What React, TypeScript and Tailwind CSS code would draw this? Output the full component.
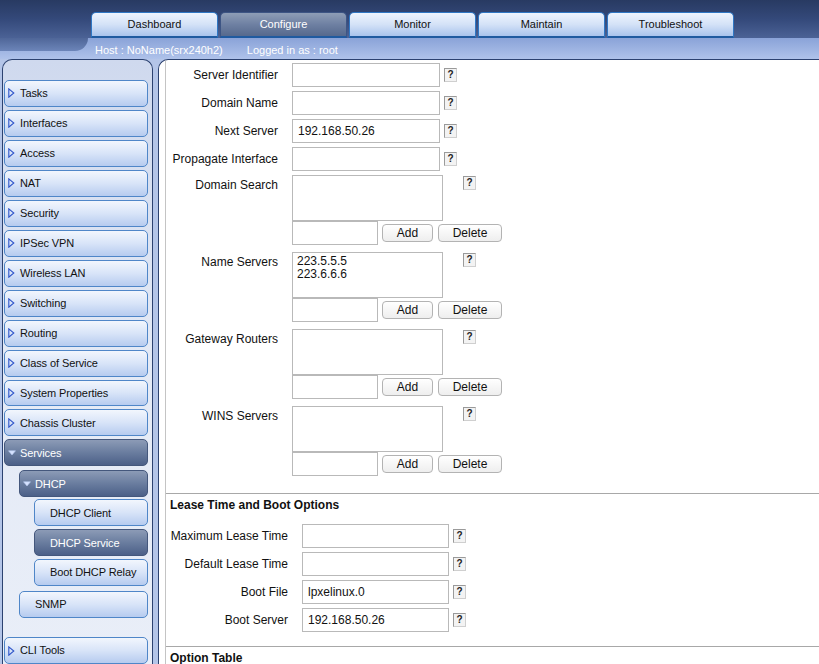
import React from "react";

const font = { fontFamily: '"Liberation Sans", Arial, sans-serif' };

function RightTri({ light }: { light?: boolean }) {
  return (
    <svg width="7" height="10" viewBox="0 0 7 10" className="shrink-0">
      <polygon points="0.8,0.8 5.8,5 0.8,9.2" fill="none" stroke={light ? "#dfe8ff" : "#2f55c9"} strokeWidth="1.1" />
    </svg>
  );
}

function DownTri() {
  return (
    <svg width="8" height="6" viewBox="0 0 8 6" className="shrink-0">
      <polygon points="0.5,0.8 7.5,0.8 4,5" fill="#d7e3ff" stroke="#b7c9f0" strokeWidth="0.6" />
    </svg>
  );
}

type NavProps = {
  label: string;
  indent?: 0 | 15 | 30;
  kind?: "collapsed" | "expanded" | "leaf";
  active?: boolean;
  mt?: string;
};

function NavItem({ label, indent = 0, kind = "collapsed", active = false, mt = "mt-[3px]" }: NavProps) {
  const indentCls = indent === 0 ? "ml-0" : indent === 15 ? "ml-[15px]" : "ml-[30px]";
  const skin = active
    ? "bg-gradient-to-b from-[#8c9bb6] via-[#6a7d9f] to-[#4c6088] border-[#44577c] text-white"
    : "bg-gradient-to-b from-[#f2f6fd] via-[#d8e4f8] to-[#b6cbef] border-[#4f86c8] text-[#111]";
  return (
    <div className={`${mt} ${indentCls} h-[27px] rounded-[5px] border ${skin} flex items-center pl-[3px] text-[11px] tracking-[-0.1px]`}>
      <span className="w-[12px] flex items-center">
        {kind === "collapsed" && <RightTri />}
        {kind === "expanded" && <DownTri />}
      </span>
      <span>{label}</span>
    </div>
  );
}

function Help({ className = "" }: { className?: string }) {
  return (
    <span className={`w-[13px] h-[14px] border border-t-[#9a9a9a] border-l-[#9a9a9a] border-r-[#cfcfcf] border-b-[#cfcfcf] bg-[#f3f3f3] flex items-center justify-center text-[10px] font-bold text-[#222] leading-none shrink-0 ${className}`}>
      ?
    </span>
  );
}

function TextInput({ w, value = "" }: { w: string; value?: string }) {
  return (
    <div className={`${w} h-[24px] border border-[#b9b9b9] bg-white flex items-center pl-[5px] text-[12px] text-[#111] shrink-0`}>
      {value}
    </div>
  );
}

function Btn({ label, w }: { label: string; w: string }) {
  return (
    <div className={`${w} h-[18px] rounded-[4px] border border-[#b3b3b3] bg-gradient-to-b from-white to-[#eeeeee] flex items-center justify-center text-[12px] text-[#111] shrink-0`}>
      {label}
    </div>
  );
}

function SimpleRow({ label, value, mt = "mt-[5px]" }: { label: string; value?: string; mt?: string }) {
  return (
    <div className={`${mt} flex items-center h-[24px]`}>
      <div className="w-[112px] text-right text-[12px] text-[#111] whitespace-nowrap">{label}</div>
      <div className="ml-[14px]">
        <TextInput w="w-[148px]" value={value} />
      </div>
      <Help className="ml-[4px]" />
    </div>
  );
}

function ListRow({ label, lines = [], mt = "mt-[8px]" }: { label: string; lines?: string[]; mt?: string }) {
  return (
    <div className={`${mt} flex items-start`}>
      <div className="w-[112px] text-right text-[12px] text-[#111] pt-[1px] whitespace-nowrap">{label}</div>
      <div className="ml-[14px] flex flex-col">
        <div className="flex items-start">
          <div className="w-[151px] h-[46px] border border-[#b9b9b9] bg-white pl-[4px] pt-[2px] text-[12px] leading-[13px] text-[#111]">
            {lines.map((l) => (
              <div key={l}>{l}</div>
            ))}
          </div>
          <Help className="ml-[20px] mt-[1px]" />
        </div>
        <div className="flex items-center h-[24px]">
          <TextInput w="w-[86px]" />
          <div className="ml-[4px]">
            <Btn label="Add" w="w-[51px]" />
          </div>
          <div className="ml-[5px]">
            <Btn label="Delete" w="w-[64px]" />
          </div>
        </div>
      </div>
    </div>
  );
}

function LeaseRow({ label, value, mt = "mt-[4px]" }: { label: string; value?: string; mt?: string }) {
  return (
    <div className={`${mt} flex items-center h-[24px]`}>
      <div className="w-[122px] text-right text-[12px] text-[#111] whitespace-nowrap">{label}</div>
      <div className="ml-[14px]">
        <TextInput w="w-[147px]" value={value} />
      </div>
      <Help className="ml-[4px]" />
    </div>
  );
}

const tabs = ["Dashboard", "Configure", "Monitor", "Maintain", "Troubleshoot"];

export default function App() {
  return (
    <div style={font} className="w-[819px] h-[664px] overflow-hidden bg-[#b4c5e8] flex flex-col">
      {/* top bar with tabs */}
      <div className="h-[38px] bg-gradient-to-b from-[#283a62] via-[#34497a] to-[#4b6296] flex items-end pl-[91px] gap-[2px] shrink-0">
        {tabs.map((t) => {
          const active = t === "Configure";
          return (
            <div
              key={t}
              className={`w-[127px] h-[26px] rounded-t-[5px] border border-b-2 flex items-center justify-center text-[11px] ${
                active
                  ? "bg-gradient-to-b from-[#8e9db6] via-[#6e80a2] to-[#56698d] border-[#3d5584] border-b-[#1f5aa0] text-white"
                  : "bg-gradient-to-b from-[#eef4fd] via-[#d4e2f7] to-[#a9c3ec] border-[#2f77c4] border-b-[#1f5aa0] text-[#111]"
              }`}
            >
              {t}
            </div>
          );
        })}
      </div>
      {/* host bar */}
      <div className="h-[21px] bg-gradient-to-b from-[#8aa3d8] to-[#afc2ea] flex items-start shrink-0 relative">
        <div className="w-[88px] h-[13px] bg-gradient-to-b from-[#4f6698] to-[#6c85b9] rounded-br-[22px] shrink-0" />
        <div className="ml-[7px] mt-[4px] text-[11px] text-white flex">
          <span>Host : NoName(srx240h2)</span>
          <span className="ml-[24px]">Logged in as : root</span>
        </div>
      </div>
      {/* main */}
      <div className="flex-1 flex min-h-0">
        {/* sidebar */}
        <div className="ml-[2px] w-[151px] rounded-t-[10px] border border-b-0 border-[#2c4270] bg-gradient-to-b from-[#cfd9ee] via-[#e4eaf6] to-[#e9eef8] pl-[1px] pr-[4px] pt-[17px] flex flex-col shrink-0">
          <NavItem label="Tasks" />
          <NavItem label="Interfaces" />
          <NavItem label="Access" />
          <NavItem label="NAT" />
          <NavItem label="Security" />
          <NavItem label="IPSec VPN" />
          <NavItem label="Wireless LAN" />
          <NavItem label="Switching" />
          <NavItem label="Routing" />
          <NavItem label="Class of Service" />
          <NavItem label="System Properties" />
          <NavItem label="Chassis Cluster" />
          <NavItem label="Services" kind="expanded" active />
          <NavItem label="DHCP" indent={15} kind="expanded" active mt="mt-[4px]" />
          <NavItem label="DHCP Client" indent={30} kind="leaf" mt="mt-[2px]" />
          <NavItem label="DHCP Service" indent={30} kind="leaf" active />
          <NavItem label="Boot DHCP Relay" indent={30} kind="leaf" />
          <NavItem label="SNMP" indent={15} kind="leaf" mt="mt-[5px]" />
          <NavItem label="CLI Tools" mt="mt-[19px]" />
        </div>
        {/* content */}
        <div className="ml-[5px] flex-1 rounded-tl-[10px] border-l border-t border-[#2c4270] bg-white overflow-hidden min-w-0">
          <div className="ml-[6px] h-full border-l border-[#c4c4c4] flex flex-col">
            <SimpleRow label="Server Identifier" mt="mt-[3px]" />
            <SimpleRow label="Domain Name" mt="mt-[4px]" />
            <SimpleRow label="Next Server" value="192.168.50.26" mt="mt-[4px]" />
            <SimpleRow label="Propagate Interface" mt="mt-[4px]" />
            <ListRow label="Domain Search" mt="mt-[4px]" />
            <ListRow label="Name Servers" lines={["223.5.5.5", "223.6.6.6"]} mt="mt-[7px]" />
            <ListRow label="Gateway Routers" mt="mt-[7px]" />
            <ListRow label="WINS Servers" mt="mt-[7px]" />
            <div className="mt-[17px] border-t border-[#a8a8a8]" />
            <div className="mt-[4px] pl-[4px] text-[12px] font-bold text-[#111] leading-[14px]">Lease Time and Boot Options</div>
            <LeaseRow label="Maximum Lease Time" mt="mt-[12px]" />
            <LeaseRow label="Default Lease Time" />
            <LeaseRow label="Boot File" value="lpxelinux.0" />
            <LeaseRow label="Boot Server" value="192.168.50.26" />
            <div className="mt-[14px] border-t border-[#a8a8a8]" />
            <div className="mt-[4px] pl-[4px] text-[12px] font-bold text-[#111] leading-[14px]">Option Table</div>
          </div>
        </div>
      </div>
    </div>
  );
}
